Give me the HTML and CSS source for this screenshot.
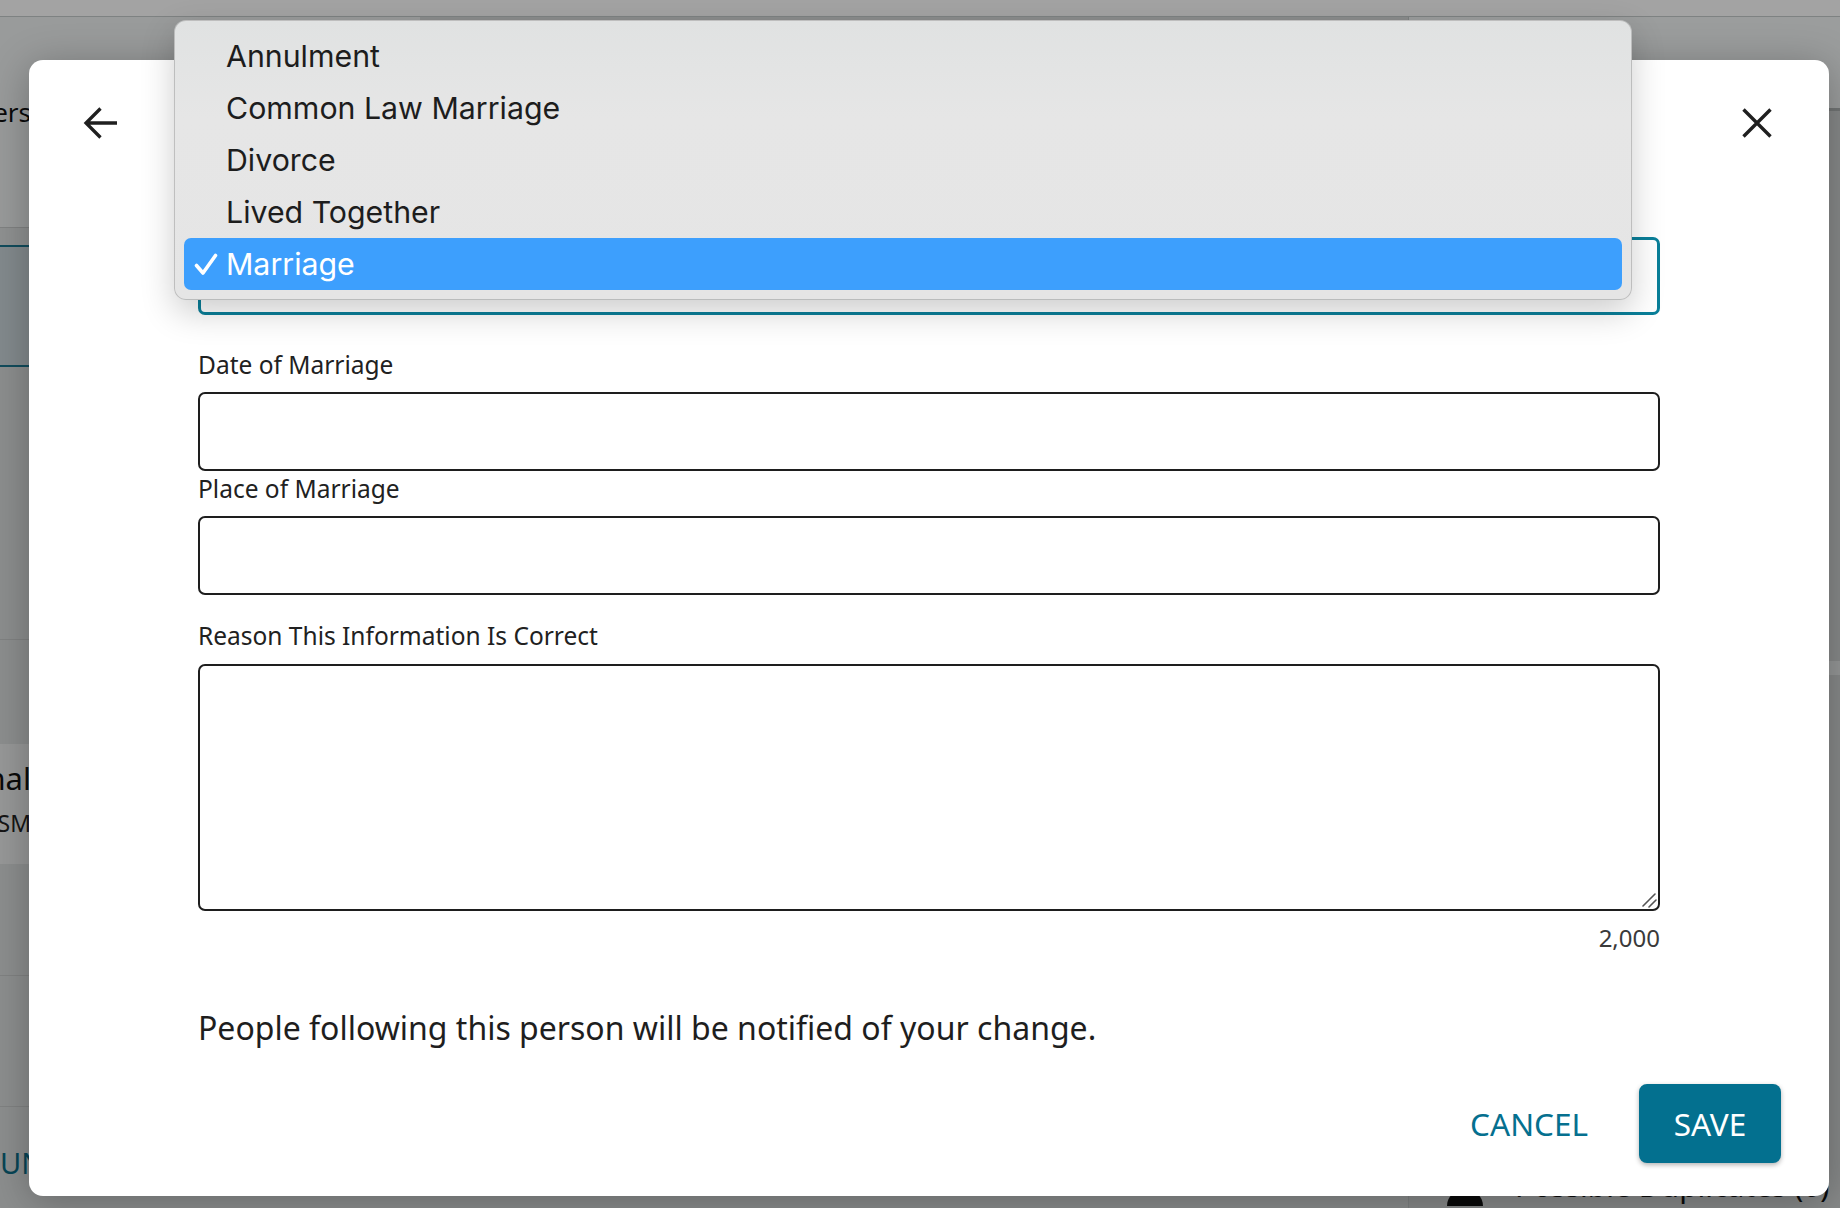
FILE: index.html
```html
<!DOCTYPE html>
<html lang="en">
<head>
<meta charset="utf-8">
<title>Edit Relationship</title>
<link rel="stylesheet" href="styles.css">
</head>
<body>
<div class="page">
  <div class="topbar"></div>
  <div class="page-body">
    <div class="left">
      <div class="left-head"><span class="clip-end">Family Members</span></div>
      <div class="left-gap"></div>
      <div class="left-tab"></div>
      <div class="left-sec s1"></div>
      <div class="left-sec s2"></div>
      <div class="left-card">
        <div class="card-name clip-end">Personal</div>
        <div class="card-sub clip-end">LHSM</div>
      </div>
      <div class="left-sec s3"></div>
      <div class="left-sec s4"></div>
      <div class="left-link">UNLINK</div>
    </div>
    <div class="main"></div>
    <div class="rail">
      <div class="rail-head"></div>
      <div class="rail-sec"></div>
      <div class="rail-band"></div>
      <div class="rail-space"></div>
      <div class="rail-row">
        <svg class="rail-icon" viewBox="0 0 40 40" width="40" height="40"><circle cx="20" cy="12" r="8" fill="#111"/><path d="M2 40c0-10 8-16 18-16s18 6 18 16z" fill="#111"/></svg>
        <span>Possible Duplicates (0)</span>
      </div>
    </div>
  </div>
</div>

<div class="backdrop"></div>

<div class="modal">
  <div class="modal-head">
    <button class="icon-btn" aria-label="Back">
      <svg viewBox="0 0 40 40" width="40" height="40"><path d="M37 20H6.5M20.5 5.5 6 20l14.5 14.5" fill="none" stroke="#1f1f1f" stroke-width="3.3"/></svg>
    </button>
    <button class="icon-btn" aria-label="Close">
      <svg viewBox="0 0 40 40" width="40" height="40"><path d="M6.5 6.5l27 27M33.5 6.5l-27 27" fill="none" stroke="#1f1f1f" stroke-width="3.4"/></svg>
    </button>
  </div>
  <div class="form">
    <div class="select"></div>
    <label class="label lbl-date">Date of Marriage</label>
    <input class="field" type="text">
    <label class="label lbl-place">Place of Marriage</label>
    <input class="field" type="text">
    <label class="label lbl-reason">Reason This Information Is Correct</label>
    <div class="area-wrap">
      <textarea class="area"></textarea>
      <svg class="grabber" viewBox="0 0 16 16" width="16" height="16"><path d="M2 14L14 2M8 15l7-7" fill="none" stroke="#555" stroke-width="1.6" stroke-linecap="round"/></svg>
    </div>
    <div class="counter">2,000</div>
    <p class="notice">People following this person will be notified of your change.</p>
  </div>
  <div class="footer">
    <button class="btn-text">CANCEL</button>
    <button class="btn-save">SAVE</button>
  </div>
</div>

<div class="menu">
  <div class="item">Annulment</div>
  <div class="item">Common Law Marriage</div>
  <div class="item">Divorce</div>
  <div class="item">Lived Together</div>
  <div class="item selected"><svg class="check" viewBox="0 0 24 22" width="24" height="22"><path d="M2.5 12.5l6.5 7.5L21.5 2.5" fill="none" stroke="#fff" stroke-width="3.6" stroke-linecap="round" stroke-linejoin="round"/></svg>Marriage</div>
</div>
</body>
</html>
```

FILE: styles.css
```css
* { box-sizing: border-box; }
html, body { margin: 0; padding: 0; }
body {
  width: 1840px;
  height: 1208px;
  overflow: hidden;
  font-family: "Noto Sans", "Open Sans", sans-serif;
  color: #212121;
  position: relative;
}

/* ---------- underlying page ---------- */
.page {
  height: 1208px;
  display: flex;
  flex-direction: column;
  background: #dadddd;
}
.topbar {
  height: 17px;
  background: #ffffff;
  border-bottom: 1px solid #c6cbcb;
}
.page-body { flex: 1; display: flex; }
.left {
  width: 420px;
  display: flex;
  flex-direction: column;
  background: #dcdfdf;
}
.clip-end {
  display: flex;
  justify-content: flex-end;
  width: 31px;
  white-space: nowrap;
}
.left-head {
  height: 211px;
  background: #f0f3f3;
  border-bottom: 1px solid #c8cccc;
  padding-top: 78px;
  font-size: 26px;
  line-height: 34px;
  color: #111;
}
.left-gap { height: 17px; background: #e0e3e3; }
.left-tab {
  height: 122px;
  background: #cdd8dd;
  border-top: 2px solid #1b7791;
  border-bottom: 2px solid #1b7791;
}
.left-sec { border-bottom: 1px solid #c8cccc; }
.s1 { height: 273px; }
.s2 { height: 104px; border-bottom: none; }
.left-card {
  height: 120px;
  background: #eceeee;
  padding-top: 14px;
  color: #111;
}
.card-name { font-size: 31px; line-height: 40px; }
.card-sub { font-size: 23px; line-height: 40px; color: #222; padding-top: 5px; }
.s3 { height: 112px; }
.s4 { height: 131px; }
.left-link {
  padding-top: 36px;
  font-size: 29px;
  line-height: 40px;
  color: #0c6c87;
  white-space: nowrap;
}
.main { flex: 1; background: #d8dbdb; }
.rail {
  width: 432px;
  display: flex;
  flex-direction: column;
  background: #d3d6d7;
  border-left: 1px solid #c4c8c8;
}
.rail-head {
  height: 94px;
  background: #f3f6f6;
  border-bottom: 3px solid #b3b8b8;
}
.rail-sec { height: 550px; }
.rail-band { height: 14px; background: #eaecec; }
.rail-space { height: 491px; }
.rail-row {
  display: flex;
  align-items: center;
  gap: 30px;
  padding-left: 36px;
  font-size: 30px;
  line-height: 40px;
  color: #111;
  white-space: nowrap;
}

.backdrop {
  position: absolute;
  inset: 0;
  background: rgba(0, 0, 0, 0.36);
}

/* ---------- modal ---------- */
.modal {
  position: absolute;
  left: 29px;
  top: 60px;
  width: 1800px;
  height: 1136px;
  background: #ffffff;
  border-radius: 14px;
  box-shadow: 0 6px 40px rgba(0, 0, 0, 0.28);
  display: flex;
  flex-direction: column;
}
.modal-head {
  display: flex;
  justify-content: space-between;
  padding: 43px 52px 0 51px;
}
.icon-btn {
  width: 40px;
  height: 40px;
  padding: 0;
  border: 0;
  background: none;
  display: block;
}
.icon-btn svg { display: block; }

.form {
  display: flex;
  flex-direction: column;
  padding: 0 169px;
}
.select {
  margin-top: 94px;
  height: 78px;
  border: 3px solid #0a7f99;
  border-radius: 7px;
}
.label {
  display: block;
  font-size: 24.5px;
  line-height: 32px;
  color: #212121;
}
.lbl-date { margin-top: 34px; }
.lbl-place { margin-top: 2px; }
.lbl-reason { margin-top: 25px; }
.field {
  display: block;
  width: 100%;
  height: 79px;
  margin: 11px 0 0;
  border: 2px solid #1e1e1e;
  border-radius: 7px;
  background: #fff;
  font: inherit;
  font-size: 26px;
  padding: 0 20px;
  outline: none;
}
.area-wrap {
  position: relative;
  margin-top: 12px;
}
.area {
  display: block;
  width: 100%;
  height: 247px;
  margin: 0;
  border: 2px solid #1e1e1e;
  border-radius: 7px;
  background: #fff;
  font: inherit;
  font-size: 26px;
  padding: 16px 20px;
  resize: none;
  outline: none;
}
.grabber {
  position: absolute;
  right: 3px;
  bottom: 3px;
  pointer-events: none;
}
.counter {
  margin-top: 11px;
  text-align: right;
  font-size: 24px;
  line-height: 32px;
  color: #3a3a3a;
}
.notice {
  margin: 54px 0 0;
  font-size: 32px;
  line-height: 40px;
  color: #1e1e1e;
}
.footer {
  display: flex;
  justify-content: flex-end;
  align-items: center;
  margin-top: 36px;
  padding-right: 48px;
}
.btn-text {
  height: 79px;
  padding: 0 17px;
  margin-right: 34px;
  border: 0;
  background: none;
  font-family: "Noto Sans", "Open Sans", sans-serif;
  font-size: 31.5px;
  color: #05708f;
}
.btn-save {
  width: 142px;
  height: 79px;
  border: 0;
  border-radius: 8px;
  background: #03708f;
  color: #ffffff;
  font-family: "Noto Sans", "Open Sans", sans-serif;
  font-size: 31.5px;
  box-shadow: 0 2px 5px rgba(0, 0, 0, 0.3);
}

/* ---------- native-style dropdown menu ---------- */
.menu {
  position: absolute;
  left: 174px;
  top: 20px;
  width: 1458px;
  height: 280px;
  padding: 9px;
  border: 1px solid rgba(0, 0, 0, 0.17);
  border-radius: 12px;
  background: linear-gradient(#e0e2e2, #e6e6e6 35%, #e5e5e5);
  box-shadow: 0 12px 34px rgba(0, 0, 0, 0.2);
  font-family: Inter, "Liberation Sans", sans-serif;
}
.item {
  height: 52px;
  display: flex;
  align-items: center;
  padding-left: 42px;
  font-size: 30.3px;
  font-weight: 400;
  color: #1d1d1d;
  border-radius: 7px;
}
.item.selected {
  background: #3d9ffd;
  color: #ffffff;
  padding-left: 10px;
}
.check { margin-right: 8px; flex: none; }
```
